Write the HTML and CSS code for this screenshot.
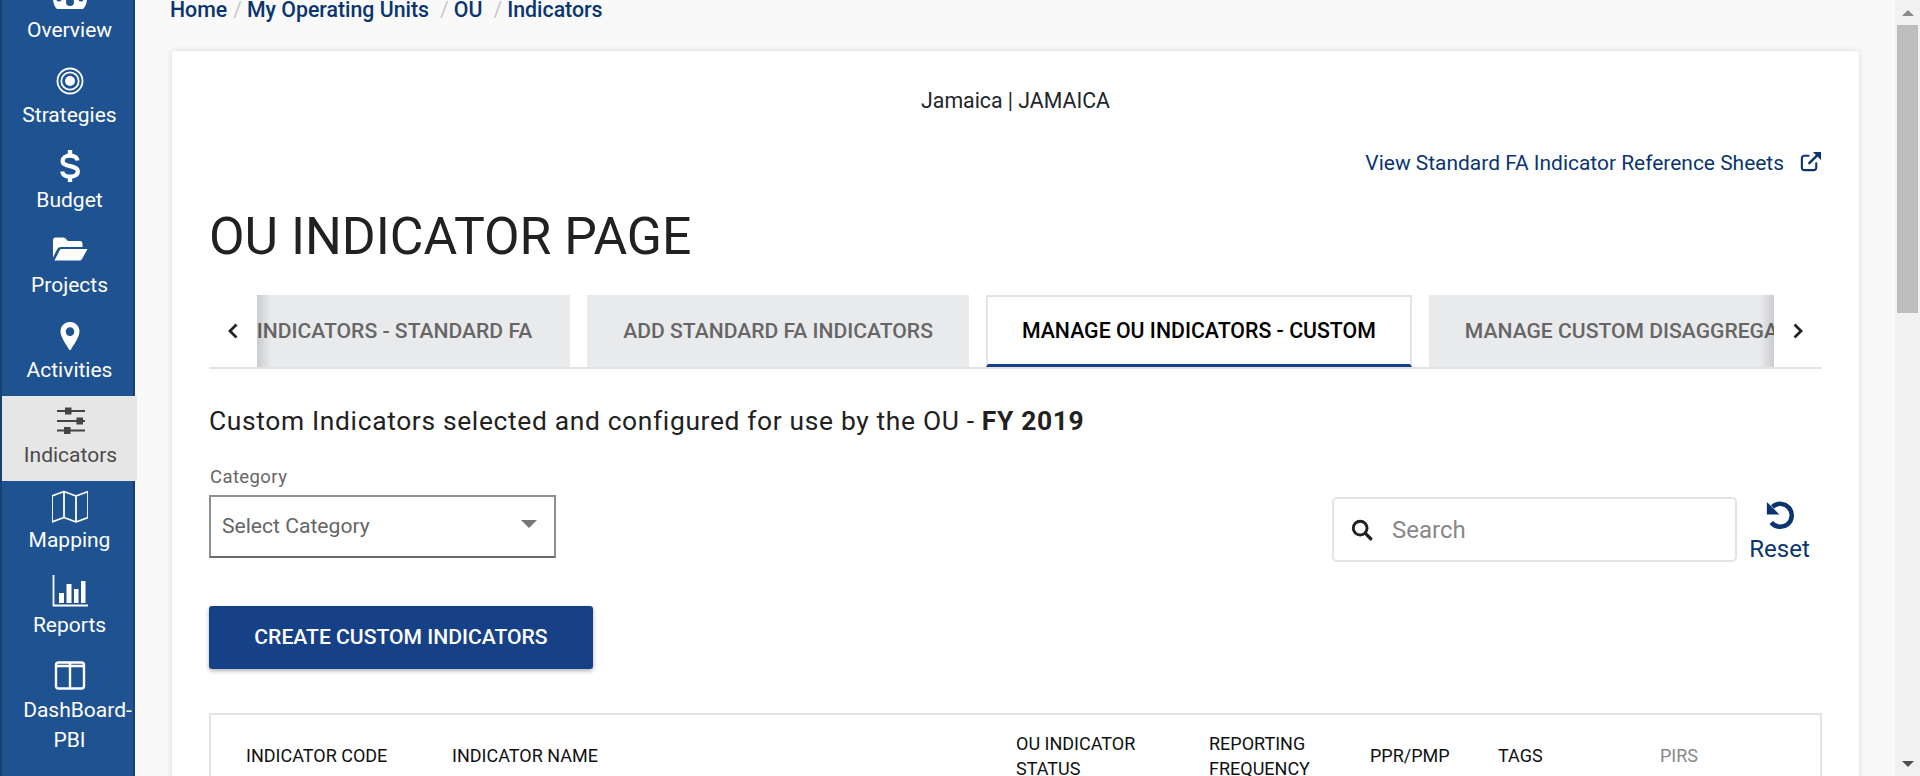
FILE: index.html
```html
<!DOCTYPE html>
<html lang="en">
<head>
<meta charset="utf-8">
<title>OU Indicator Page</title>
<link rel="stylesheet" href="styles.css">
</head>
<body>
<div class="app">
  <nav class="sidebar">
    <a class="nav-item">
      <svg class="nav-icon" viewBox="0 0 36 36"><path fill="#fff" d="M18 2C8 2 1 10 1 20c0 4 1 7 3 10 .4.6 1 1 1.700 1h24.600c.7 0 1.300-.4 1.700-1 2-3 3-6 3-10C35 10 28 2 18 2z"/><circle cx="18" cy="24" r="4" fill="#1f5290"/><circle cx="7" cy="21" r="2.600" fill="#1f5290"/><circle cx="29" cy="21" r="2.600" fill="#1f5290"/></svg>
      <span>Overview</span>
    </a>
    <a class="nav-item">
      <svg class="nav-icon" viewBox="0 0 36 36"><circle cx="18" cy="18" r="12.500" fill="none" stroke="#fff" stroke-width="1.800"/><circle cx="18" cy="18" r="8.700" fill="none" stroke="#fff" stroke-width="1.800"/><circle cx="18" cy="18" r="5" fill="#fff"/></svg>
      <span>Strategies</span>
    </a>
    <a class="nav-item">
      <svg class="nav-icon" viewBox="0 0 36 36"><path fill="none" stroke="#fff" stroke-width="4.200" d="M25.500 12.500c-.5-3-3.500-4.800-7.500-4.800-4.500 0-7.400 2.200-7.400 5.200 0 7 15.200 3.500 15.200 10.500 0 3.200-3.200 5.200-7.800 5.200-4.400 0-7.300-2-7.800-5.100"/><path stroke="#fff" stroke-width="4.400" d="M18 2v6M18 28v6"/></svg>
      <span>Budget</span>
    </a>
    <a class="nav-item">
      <svg class="nav-icon" viewBox="0 0 36 36"><path fill="#fff" d="M1 7c0-1.500 1-2.500 2.500-2.500h7.500c1 0 1.800.4 2.500 1l2.500 2.500h12c1.500 0 2.500 1 2.500 2.500V14H9c-1.700 0-3 .8-3.800 2.300L1 24.500z"/><path fill="#fff" d="M9.500 16H35.500l-5.500 10c-.6 1-1.500 1.500-2.600 1.500H2.500l5-10c.4-.9 1.100-1.500 2-1.500z"/></svg>
      <span>Projects</span>
    </a>
    <a class="nav-item">
      <svg class="nav-icon" viewBox="0 0 36 36"><path fill="#fff" fill-rule="evenodd" d="M18 4c-6 0-9.500 4.500-9.500 9.500 0 6 6.500 14 8.500 18 .4.800 1.600.8 2 0 2-4 8.500-12 8.500-18C27.500 8.500 24 4 18 4zm0 5.300a4.300 4.300 0 1 1 0 8.600 4.300 4.300 0 0 1 0-8.600z"/></svg>
      <span>Activities</span>
    </a>
    <a class="nav-item active">
      <svg class="nav-icon" viewBox="0 0 36 36"><path stroke="#444" stroke-width="1.800" d="M4 8h28M4 18h28M4 27.500h28"/><path fill="#444" d="M12 4.500h6.500v7H12zM23.500 14.500H30v7h-6.500zM11 24h6.500v7H11z"/></svg>
      <span>Indicators</span>
    </a>
    <a class="nav-item">
      <svg class="nav-icon" viewBox="0 0 36 36"><path fill="none" stroke="#fff" stroke-width="1.800" stroke-linejoin="round" d="M0 8 12 3.500 24 8 36 3.500V29.500L24 34 12 29.500 0 34zM12 3.500V29.500M24 8V34"/></svg>
      <span>Mapping</span>
    </a>
    <a class="nav-item">
      <svg class="nav-icon" viewBox="0 0 36 36"><path fill="none" stroke="#fff" stroke-width="1.800" d="M1.500 2v30.500H36"/><path fill="#fff" d="M7 20h5v10H7zM14.500 11h5v19h-5zM22 16h4.500v14H22zM29 8h4.500v22H29z"/></svg>
      <span>Reports</span>
    </a>
    <a class="nav-item">
      <svg class="nav-icon" viewBox="0 0 36 36"><rect x="4" y="4.500" width="28" height="26" rx="2.500" fill="none" stroke="#fff" stroke-width="2.400"/><path stroke="#fff" stroke-width="2.400" d="M18 4.500v26M4 8h28"/></svg>
      <span class="two-line">DashBoard-
PBI</span>
    </a>
  </nav>

  <main class="main">
    <div class="breadcrumb">
      <a>Home</a><i>/</i><a>My Operating Units</a><i class="wide">/</i><a>OU</a><i class="wide">/</i><a>Indicators</a>
    </div>

    <section class="card">
      <p class="org">Jamaica | JAMAICA</p>
      <div class="ref-row">
        <a class="ref-link">View Standard FA Indicator Reference Sheets</a>
        <svg class="ext-icon" viewBox="0 0 24 24"><path fill="none" stroke="#0a3570" stroke-width="2.200" stroke-linecap="round" d="M18 14v4.500a2.500 2.500 0 0 1-2.500 2.500h-10A2.500 2.500 0 0 1 3 18.500v-10A2.500 2.500 0 0 1 5.500 6H10"/><path fill="none" stroke="#0a3570" stroke-width="2.600" d="M10 14.500 20.500 4"/><path fill="#0a3570" d="M14.500 2H23v8.500z"/></svg>
      </div>
      <h1 class="title">OU INDICATOR PAGE</h1>

      <div class="tabs">
        <button class="tab-arrow"><svg viewBox="0 0 12 18"><path fill="none" stroke="#222" stroke-width="2.800" d="M9.500 2.500 3 9l6.500 6.500"/></svg></button>
        <div class="tab-window">
          <div class="tab-strip">
            <a class="tab">MANAGE OU INDICATORS - STANDARD FA</a>
            <a class="tab">ADD STANDARD FA INDICATORS</a>
            <a class="tab current">MANAGE OU INDICATORS - CUSTOM</a>
            <a class="tab">MANAGE CUSTOM DISAGGREGATIONS</a>
          </div>
          <span class="fade fade-left"></span>
          <span class="fade fade-right"></span>
        </div>
        <button class="tab-arrow"><svg viewBox="0 0 12 18"><path fill="none" stroke="#222" stroke-width="2.800" d="M2.500 2.500 9 9l-6.500 6.500"/></svg></button>
      </div>

      <h2 class="subtitle">Custom Indicators selected and configured for use by the OU - <b>FY 2019</b></h2>

      <div class="filters">
        <div class="field">
          <label class="field-label">Category</label>
          <div class="select"><span>Select Category</span><span class="caret"></span></div>
        </div>
        <div class="search-group">
          <div class="search">
            <svg class="search-icon" viewBox="0 0 24 24"><circle cx="10" cy="10" r="7.500" fill="none" stroke="#222" stroke-width="3.200"/><path stroke="#222" stroke-width="3.600" stroke-linecap="round" d="m16 16 5.500 5.500"/></svg>
            <span>Search</span>
          </div>
          <a class="reset">
            <svg class="reset-icon" viewBox="0 0 24 24"><path fill="none" stroke="#0a3570" stroke-width="3.600" d="M6 5.500A9.200 9.200 0 1 1 5 18"/><path fill="#0a3570" d="M1.500 1.500v10h10z"/></svg>
            <span>Reset</span>
          </a>
        </div>
      </div>

      <button class="create">CREATE CUSTOM INDICATORS</button>

      <div class="table">
        <div class="th">INDICATOR CODE</div>
        <div class="th">INDICATOR NAME</div>
        <div class="th">OU INDICATOR STATUS</div>
        <div class="th">REPORTING FREQUENCY</div>
        <div class="th">PPR/PMP</div>
        <div class="th">TAGS</div>
        <div class="th muted">PIRS</div>
      </div>
    </section>
  </main>

  <div class="scrollbar">
    <div class="sb-btn"><span class="sb-up"></span></div>
    <div class="sb-thumb"></div>
    <div class="sb-track"></div>
    <div class="sb-btn"><span class="sb-down"></span></div>
  </div>
</div>
</body>
</html>
```

FILE: styles.css
```css
* { box-sizing: border-box; }
html, body { margin: 0; height: 776px; overflow: hidden; }
body { font-family: Roboto, "Liberation Sans", sans-serif; color: #212529; background: #f9f9f9; }
a { color: inherit; text-decoration: none; }

.app { display: flex; height: 776px; overflow: hidden; }

.sidebar {
  flex: 0 0 135px;
  width: 135px;
  height: 776px;
  background: #1f5290;
  border-left: 2px solid #163f75;
  border-right: 2px solid #163f75;
  color: #fff;
  position: relative;
  z-index: 1;
}
.nav-item {
  display: flex;
  flex-direction: column;
  align-items: center;
  height: 85px;
  width: 135px;
  padding-top: 7px;
  font-size: 21px;
  line-height: 30px;
  text-align: center;
}
.nav-item:first-child { margin-top: -29px; }
.nav-item:last-child { height: 125px; }
.nav-icon { width: 36px; height: 36px; display: block; margin-bottom: 1px; flex: none; }
.nav-item.active { background: #e6e6e6; color: #4a4a4a; padding-left: 2px; }
.two-line { white-space: pre-line; text-indent: 16px; }

.main { flex: 1; min-width: 0; padding: 0 36px 0 35px; }

.breadcrumb {
  height: 51px;
  color: #0a3570;
  font-size: 21.3px;
  line-height: 19px;
  font-weight: 500;
  white-space: nowrap;
}
.breadcrumb i { font-style: normal; font-weight: 400; color: #c8c8c8; padding: 0 5px 0 6px; }
.breadcrumb i.wide { padding: 0 5px 0 11px; }

.card {
  background: #fff;
  height: 770px;
  margin-left: 2px;
  padding: 37px 37px 0;
  box-shadow: 0 0 6px rgba(0, 0, 0, .14);
  border-radius: 2px;
}
.org { margin: 0; text-align: center; font-size: 21.3px; line-height: 26px; }
.ref-row { display: flex; justify-content: flex-end; align-items: center; gap: 15px; margin-top: 36px; height: 26px; color: #0a3570; }
.ref-link { font-size: 20.95px; }
.ext-icon { width: 23px; height: 23px; margin-bottom: 4px; }
.title { margin: 32px 0 0; font-size: 51.7px; line-height: 58px; font-weight: 400; color: #212121; }

.tabs { display: flex; align-items: stretch; height: 74px; margin-top: 29px; border-bottom: 2px solid #e3e3e3; }
.tab-arrow { flex: 1; padding: 0; border: 0; background: transparent; display: flex; align-items: center; justify-content: center; }
.tab-arrow svg { width: 12px; height: 18px; }
.tab-window { flex: 0 0 1517px; width: 1517px; overflow: hidden; position: relative; height: 72px; }
.tab-strip { display: flex; gap: 17px; margin-left: -163px; height: 72px; width: max-content; }
.tab {
  display: flex; align-items: center;
  height: 72px;
  padding: 0 36px 2px;
  background: #e9eaec;
  color: #666;
  font-size: 21.12px;
  font-weight: 500;
  white-space: nowrap;
}
.tab:first-child { padding-right: 38px; }
.tab.current {
  background: #fff;
  color: #000;
  font-size: 21.3px;
  border: 2px solid #e3e3e3;
  border-bottom: 3px solid #164187;
  padding: 0 34px;
}
.fade { position: absolute; top: 0; bottom: 0; width: 14px; }
.fade-left { left: 0; background: linear-gradient(90deg, rgba(0,0,0,.13), rgba(0,0,0,0)); }
.fade-right { right: 0; background: linear-gradient(270deg, rgba(0,0,0,.13), rgba(0,0,0,0)); }

.subtitle { margin: 35px 0 0; font-size: 26.4px; line-height: 34px; font-weight: 400; letter-spacing: .65px; color: #212121; }
.subtitle b { font-weight: 700; }

.filters { display: flex; justify-content: space-between; align-items: flex-start; margin-top: 29px; }
.field-label { display: block; font-size: 18.5px; line-height: 20px; color: #666; letter-spacing: .4px; padding-left: 1px; }
.select {
  display: flex; align-items: center; justify-content: space-between;
  width: 347px; height: 63px;
  margin-top: 8px;
  padding: 0 17px 2px 11px;
  border: 2px solid #8f8f8f;
  border-bottom-color: #6b6b6b;
  font-size: 21.12px;
  color: #666;
}
.caret { width: 0; height: 0; border-left: 8px solid transparent; border-right: 8px solid transparent; border-top: 8px solid #777; margin-bottom: 4px; }

.search-group { display: flex; align-items: flex-start; margin-top: 30px; }
.search {
  display: flex; align-items: center; gap: 19px;
  width: 405px; height: 65px;
  padding: 0 17px;
  border: 2px solid #e2e3e6;
  border-radius: 5px;
  font-size: 24px;
  color: #888;
}
.search-icon { width: 22px; height: 22px; margin-top: 1px; flex: none; }
.reset { width: 85px; display: flex; flex-direction: column; align-items: center; color: #0a3570; font-size: 24px; line-height: 26px; }
.reset-icon { width: 30px; height: 30px; margin: 3px 0 6px; }

.create {
  display: block;
  width: 384px; height: 63px;
  margin-top: 44px;
  padding: 0 0 2px;
  border: 0;
  border-radius: 3px;
  background: #164187;
  color: #fff;
  font-family: inherit;
  font-size: 21.12px;
  font-weight: 500;
  box-shadow: 0 2px 4px rgba(0, 0, 0, .3);
}

.table {
  display: grid;
  grid-template-columns: 206px 564px 193px 161px 128px 162px 1fr;
  align-items: center;
  margin-top: 44px;
  padding: 0 0 0 35px;
  height: 84px;
  border: 2px solid #e3e3e3;
  border-bottom: 0;
  font-size: 18px;
  line-height: 25.500px;
  color: #111;
}
.th { max-width: 150px; }
.th:first-child, .th:nth-child(2) { max-width: none; }
.th.muted { color: #888; }

.scrollbar { flex: 0 0 25px; width: 25px; height: 776px; background: #f1f1f1; display: flex; flex-direction: column; padding: 0 2px; }
.sb-btn { height: 25px; display: flex; align-items: center; justify-content: center; flex: none; }
.sb-up { border-left: 6px solid transparent; border-right: 6px solid transparent; border-bottom: 6px solid #8a8a8a; }
.sb-down { border-left: 6px solid transparent; border-right: 6px solid transparent; border-top: 6px solid #505050; }
.sb-thumb { height: 288px; background: #bdbdbd; flex: none; }
.sb-track { flex: 1; }
```
